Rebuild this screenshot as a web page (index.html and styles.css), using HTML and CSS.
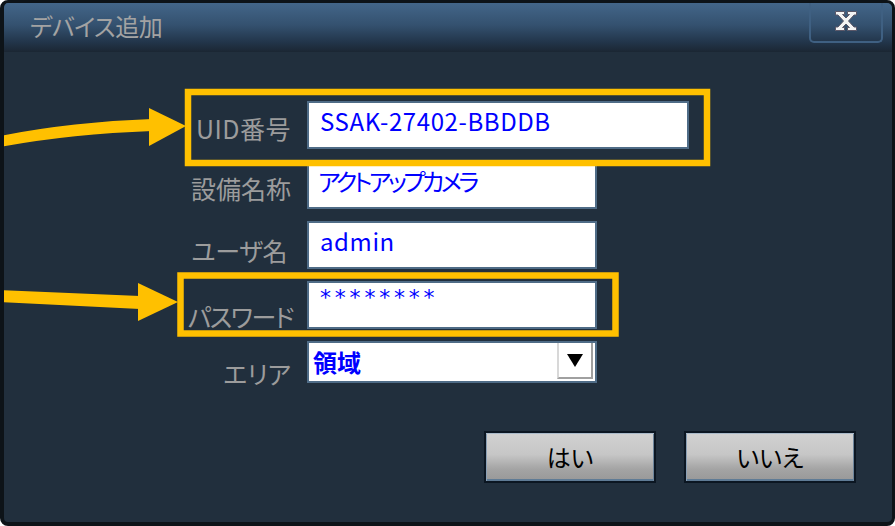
FILE: index.html
```html
<!DOCTYPE html>
<html lang="ja">
<head>
<meta charset="utf-8">
<title>デバイス追加</title>
<link rel="stylesheet" href="styles.css">
</head>
<body>
<div class="dialog">
  <div class="titlebar">
    <span class="title">デバイス追加</span>
    <div class="close">
      <svg width="24" height="22" viewBox="0 0 24 22">
        <path d="M1.5 1.5h9v3h-2l3.5 3.5 3.5-3.5h-2v-3h9v3.5h-2.5l-5.5 6 5.5 6h2.5v3.5h-9v-3h2l-3.5-3.5-3.5 3.5h2v3h-9v-3.5h2.5l5.5-6-5.5-6h-2.5z" fill="#f4f4f4" stroke="#5c5868" stroke-width="1"/>
      </svg>
    </div>
  </div>
  <div class="content">
    <div class="form">
      <div class="lbl l1">UID番号</div>
      <div class="field wide">SSAK-27402-BBDDB</div>
      <div class="lbl l2">設備名称</div>
      <div class="field kana">アクトアップカメラ</div>
      <div class="lbl l3">ユーザ名</div>
      <div class="field">admin</div>
      <div class="lbl l4">パスワード</div>
      <div class="field pw">********</div>
      <div class="lbl l5">エリア</div>
      <div class="select">
        <span class="sel-text">領域</span>
        <span class="sel-btn"><span class="tri"></span></span>
      </div>
    </div>
    <div class="buttons">
      <div class="btn">はい</div>
      <div class="btn">いいえ</div>
    </div>
  </div>
  <svg class="annot" width="895" height="526" viewBox="0 0 895 526">
    <rect x="188" y="92" width="519" height="71" fill="none" stroke="#ffc000" stroke-width="6.5"/>
    <rect x="180.5" y="275.5" width="435" height="58" fill="none" stroke="#ffc000" stroke-width="6.5"/>
    <path d="M0 136 Q70 122 152 119 L152 131 Q70 134 0 147 Z" fill="#ffc000"/>
    <path d="M149 108 L186 126 L149 146 Z" fill="#ffc000"/>
    <path d="M0 290 L140 296 L140 309 L0 302 Z" fill="#ffc000"/>
    <path d="M138 283 L178 302 L138 321 Z" fill="#ffc000"/>
  </svg>
</div>
</body>
</html>
```
FILE: styles.css
```css
html, body {
  margin: 0;
  padding: 0;
  background: #ffffff;
}
body {
  font-family: "Noto Sans CJK JP", "Noto Sans", sans-serif;
  font-feature-settings: "palt";
}
.dialog {
  position: relative;
  box-sizing: border-box;
  width: 895px;
  height: 526px;
  border-style: solid;
  border-color: #0d1318;
  border-width: 3px 3px 4px 4px;
  border-radius: 8px;
  background: #212f3d;
  display: flex;
  flex-direction: column;
  overflow: hidden;
}
.titlebar {
  height: 49px;
  flex: none;
  display: flex;
  align-items: flex-start;
  background: linear-gradient(#436689 0%, #34516f 45%, #22354a 80%, #1b2633 100%);
}
.title {
  margin: 11px 0 0 26px;
  font-size: 24px;
  line-height: 24px;
  color: #a3a3a3;
  letter-spacing: -0.5px;
}
.close {
  margin-left: auto;
  margin-right: 9px;
  box-sizing: border-box;
  width: 74px;
  height: 40px;
  border: 2px solid #3f6082;
  border-top: none;
  border-radius: 0 0 5px 5px;
  display: flex;
  align-items: center;
  justify-content: center;
  padding-bottom: 2px;
}
.content {
  flex: 1;
  display: flex;
  flex-direction: column;
}
.form {
  margin-top: 49px;
  display: grid;
  grid-template-columns: 287px auto;
  grid-template-rows: 48px 48px 48px 48px 42px;
  column-gap: 16px;
  row-gap: 12px;
}
.lbl {
  align-self: end;
  justify-self: end;
  font-size: 25px;
  line-height: 25px;
  color: #9c9c9c;
}
.l1 { margin-bottom: 8px; letter-spacing: 0.5px; }
.l2 { margin-bottom: 8px; }
.l3 { margin-bottom: 6px; margin-right: 4px; letter-spacing: -0.5px; }
.l4 { margin-bottom: 0; margin-right: -2px; letter-spacing: -1.5px; }
.l5 { margin-bottom: -3px; }
.field {
  box-sizing: border-box;
  width: 290px;
  height: 48px;
  border: 2px solid #4f6c87;
  background: #ffffff;
  color: #0000ff;
  padding: 6px 11px;
  font-size: 24px;
  line-height: 24px;
  letter-spacing: 0.6px;
  white-space: nowrap;
  overflow: hidden;
}
.field.wide { width: 382px; }
.field.kana {
  padding-left: 9px;
  letter-spacing: -3.4px;
}
.field.pw {
  font-family: "DejaVu Sans", sans-serif;
  font-size: 22px;
  letter-spacing: 3.8px;
  padding-top: 3px;
}
.select {
  box-sizing: border-box;
  width: 290px;
  height: 42px;
  border: 2px solid #4f6c87;
  background: #ffffff;
  display: flex;
}
.sel-text {
  flex: 1;
  padding: 7px 0 0 4px;
  font-size: 24px;
  line-height: 24px;
  font-weight: bold;
  color: #0000ff;
}
.sel-btn {
  box-sizing: border-box;
  width: 36px;
  margin-bottom: 2px;
  margin-right: 2px;
  border-left: 2px solid #d8d8d8;
  border-right: 2px solid #a0a0a0;
  border-bottom: 2px solid #a0a0a0;
  display: flex;
  align-items: center;
  justify-content: center;
}
.tri {
  width: 0;
  height: 0;
  border-left: 8px solid transparent;
  border-right: 8px solid transparent;
  border-top: 13px solid #000000;
}
.buttons {
  margin-top: 48px;
  display: flex;
  justify-content: flex-end;
  gap: 28px;
  padding-right: 36px;
}
.btn {
  box-sizing: border-box;
  width: 172px;
  height: 52px;
  border: 2px solid #0b1622;
  background: linear-gradient(#d2d2d2 0%, #c6c6c6 45%, #a4a4a4 75%, #989898 100%);
  box-shadow: inset 0 1px 0 #a9b9c9, inset 1px 0 0 #8aa0b6, inset -1px 0 0 #6d859c, inset 0 -2px 0 #5f7b95;
  display: flex;
  align-items: center;
  justify-content: center;
  font-size: 24px;
  line-height: 24px;
  color: #000000;
}
.annot {
  position: absolute;
  left: -4px;
  top: -3px;
  pointer-events: none;
}
```
